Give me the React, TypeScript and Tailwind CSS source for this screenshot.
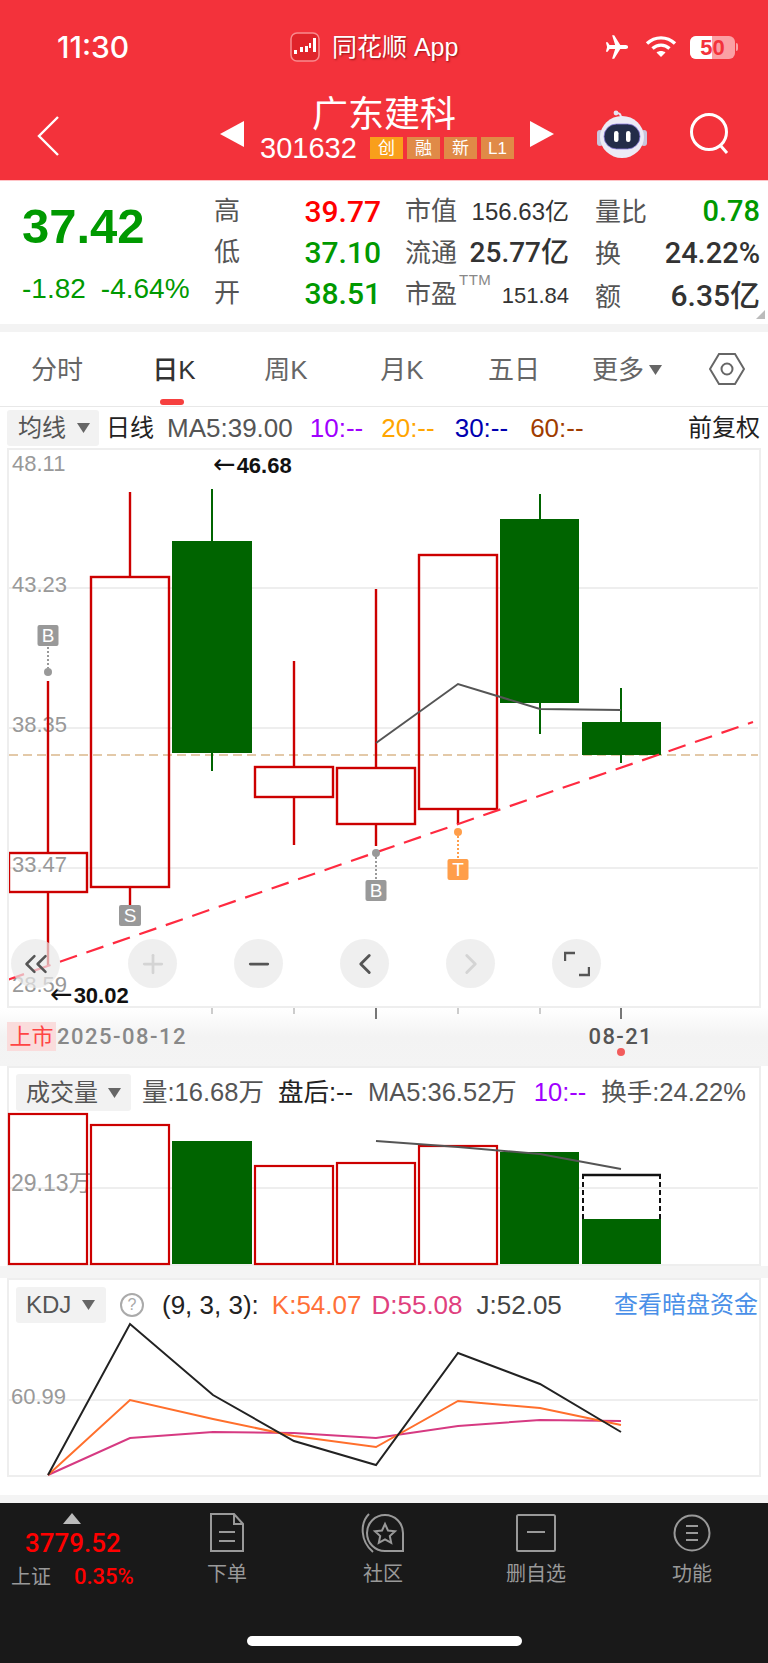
import { ChevronLeft, ChevronRight, ChevronsLeft, Minus, Plus } from 'lucide-react';

const RED = '#cc0000';
const GREEN = '#006400';

// x1-x2 corpo, y1-y2 corpo, wick top / bottom, coordenadas de pantalla
const candles = [
  { x1: 9, x2: 87, y1: 853, y2: 892, wx: 48, top: 681, bottom: 965, up: true },
  { x1: 91, x2: 169, y1: 577, y2: 887, wx: 130, top: 492, bottom: 910, up: true },
  { x1: 172, x2: 252, y1: 541, y2: 753, wx: 212, top: 489, bottom: 771, up: false },
  { x1: 255, x2: 333, y1: 767, y2: 797, wx: 294, top: 661, bottom: 845, up: true },
  { x1: 337, x2: 415, y1: 768, y2: 824, wx: 376, top: 589, bottom: 846, up: true },
  { x1: 419, x2: 497, y1: 555, y2: 809, wx: 458, top: 555, bottom: 824, up: true },
  { x1: 500, x2: 579, y1: 519, y2: 703, wx: 540, top: 494, bottom: 734, up: false },
  { x1: 582, x2: 661, y1: 722, y2: 755, wx: 621, top: 688, bottom: 763, up: false },
];

const volumes = [
  { x1: 9, x2: 87, top: 1113, up: true },
  { x1: 91, x2: 169, top: 1124, up: true },
  { x1: 172, x2: 252, top: 1141, up: false },
  { x1: 255, x2: 333, top: 1165, up: true },
  { x1: 337, x2: 415, top: 1162, up: true },
  { x1: 419, x2: 497, top: 1145, up: true },
  { x1: 500, x2: 579, top: 1152, up: false },
];

const kdjX = [48, 130, 213, 294, 376, 458, 540, 621];
const kdjJ = [1475, 1324, 1395, 1441, 1465, 1353, 1384, 1432];
const kdjK = [1475, 1400, 1419, 1436, 1447, 1401, 1408, 1425];
const kdjD = [1475, 1438, 1432, 1433, 1438, 1426, 1420, 1421];

const points = (ys: number[]) => ys.map((y, i) => `${kdjX[i]},${y}`).join(' ');

const Caret = ({ className = '' }: { className?: string }) => (
  <svg width="13" height="10" viewBox="0 0 13 10" className={className}>
    <path d="M0 0h13L6.5 10z" fill="#666" />
  </svg>
);

const Marker = ({ x, y, label, color, dotY, from, to }: { x: number; y: number; label: string; color: string; dotY: number; from: number; to: number }) => (
  <g>
    <line x1={x} x2={x} y1={from} y2={to} stroke={color} strokeWidth="2" strokeDasharray="2 2" />
    <circle cx={x} cy={dotY} r="4" fill={color} />
    <rect x={x - 10.5} y={y} width="21" height="21" rx="2" fill={color} />
    <text x={x} y={y + 17} textAnchor="middle" fontSize="19" fill="#fff">{label}</text>
  </g>
);

const StatusBar = () => (
  <div className="flex h-[94px] items-center">
    <span className="ml-[57px] w-[233px] font-['Inter'] text-[30px] font-medium leading-none text-white">11:30</span>
    <svg width="30" height="30" viewBox="0 0 30 30">
      <rect x="1" y="1" width="28" height="28" rx="6" fill="#e0242b" stroke="#f98a8e" strokeWidth="1.5" />
      <g fill="#fff">
        <rect x="4" y="18" width="3" height="4" />
        <rect x="10" y="15" width="3" height="5" />
        <rect x="15" y="14" width="3" height="6" />
        <rect x="19" y="11" width="2" height="5" />
        <rect x="23" y="6" width="3" height="14" />
      </g>
    </svg>
    <span className="ml-3 w-[146px] text-[25px] leading-none text-white [text-shadow:1px_1px_2px_rgba(90,0,0,0.6)]">同花顺 App</span>
    <svg width="30" height="28" viewBox="0 0 24 24" className="ml-[124px] mr-[13px]" fill="#fff">
      <path d="M21.5 12c0-1-.9-1.7-2-1.7h-4.7L9.6 2H7.8l2.6 8.3H5.6L4 8H2.5l1 4-1 4H4l1.6-2.3h4.8L7.8 22h1.8l5.2-8.3h4.7c1.1 0 2-.7 2-1.7z" />
    </svg>
    <svg width="32" height="24" viewBox="0 0 32 24" fill="none" stroke="#fff" strokeWidth="3.4">
      <path d="M2 8.5c8-7.5 20-7.5 28 0" />
      <path d="M7.5 13.5c5-4.5 12-4.5 17 0" />
      <path d="M16 22l-4.500-4.500c2.500-2 6.500-2 9 0z" fill="#fff" stroke="none" />
    </svg>
    <div className="relative ml-[13px] flex h-[23px] w-[45px] overflow-hidden rounded-[6px] bg-[#fba0a4]">
      <div className="h-full w-[22px] bg-white" />
      <span className="absolute inset-0 text-center text-[22px] font-bold leading-[23px] text-[#f3323b]">50</span>
    </div>
    <div className="ml-[1px] h-[8px] w-[2px] rounded-r bg-[#fba0a4]" />
  </div>
);

const NavBar = () => (
  <div className="flex h-[86px] items-start">
    <svg width="26" height="42" viewBox="0 0 26 42" fill="none" stroke="#fff" strokeWidth="2.4" className="ml-[36px] mt-[21px]">
      <path d="M22 2 3 21l19 19" />
    </svg>
    <svg width="24" height="26" viewBox="0 0 24 26" className="ml-[158px] mt-[27px]">
      <path d="M24 0v26L0 13z" fill="#fff" />
    </svg>
    <div className="ml-[15px] flex w-[271px] flex-col items-center">
      <span className="pr-[21px] pt-[1px] text-[36px] leading-[40px] text-white">广东建科</span>
      <div className="flex h-[26px] w-full items-center pl-[1px]">
        <span className="w-[110px] text-[29px] leading-none text-white">301632</span>
        <span className="flex h-[22px] w-[33px] items-center justify-center bg-[#f99f1b] text-[17px] leading-none text-white">创</span>
        <span className="ml-[4px] flex h-[22px] w-[33px] items-center justify-center bg-[#e08a47] text-[17px] leading-none text-white">融</span>
        <span className="ml-[4px] flex h-[22px] w-[33px] items-center justify-center bg-[#e08a47] text-[17px] leading-none text-white">新</span>
        <span className="ml-[4px] flex h-[22px] w-[33px] items-center justify-center bg-[#e08a47] text-[17px] leading-none text-white">L1</span>
      </div>
    </div>
    <svg width="24" height="26" viewBox="0 0 24 26" className="mt-[27px]">
      <path d="M0 0v26l24-13z" fill="#fff" />
    </svg>
    <svg width="52" height="50" viewBox="0 0 52 50" className="ml-[42px] mt-[16px]">
      <path d="M25 8c0-3-1-5-4-5" fill="none" stroke="#e6e3f2" strokeWidth="2" />
      <circle cx="20" cy="3" r="2.4" fill="#e6e3f2" />
      <rect x="1" y="20" width="6" height="16" rx="3" fill="#c8c6dc" />
      <rect x="45" y="20" width="6" height="16" rx="3" fill="#c8c6dc" />
      <ellipse cx="26" cy="27" rx="22" ry="21" fill="#ecebf5" />
      <rect x="8" y="14" width="36" height="25" rx="12.5" fill="#232c49" stroke="#8f7fe0" strokeWidth="0.8" />
      <rect x="18" y="21" width="4.5" height="11" rx="2.2" fill="#fff" />
      <rect x="30" y="21" width="4.5" height="11" rx="2.2" fill="#fff" />
    </svg>
    <svg width="44" height="44" viewBox="0 0 44 44" fill="none" stroke="#fff" strokeWidth="3" className="ml-[41px] mt-[19px]">
      <circle cx="20" cy="19" r="17.5" />
      <path d="m31 32 7 8" />
    </svg>
  </div>
);

const Quote = () => (
  <div className="flex h-[144px] border-t border-[#ffc4c7] bg-white pt-[10px]">
    <div className="w-[214px] shrink-0 pl-[22px]">
      <div className="h-[66px] pt-[8px] text-[49px] font-bold leading-[54px] text-[#009900]">37.42</div>
      <div className="flex h-[51px] items-end text-[28px] leading-[38px] text-[#009900]">
        <span>-1.82</span>
        <span className="ml-[15px]">-4.64%</span>
      </div>
    </div>
    <div className="w-[167px] shrink-0 text-[26px] leading-[41px]">
      <div className="flex justify-between text-[#555]"><span>高</span><span className="font-['Roboto'] text-[30px] font-medium text-[#ff0000]">39.77</span></div>
      <div className="flex justify-between text-[#555]"><span>低</span><span className="font-['Roboto'] text-[30px] font-medium text-[#009900]">37.10</span></div>
      <div className="flex justify-between text-[#555]"><span>开</span><span className="font-['Roboto'] text-[30px] font-medium text-[#009900]">38.51</span></div>
    </div>
    <div className="ml-[24px] w-[164px] shrink-0 text-[26px] leading-[41px] text-[#555]">
      <div className="flex items-baseline justify-between"><span>市值</span><span className="text-[24px] text-[#333]">156.63亿</span></div>
      <div className="flex items-baseline justify-between"><span>流通</span><span className="font-['Roboto','Noto_Sans_CJK_SC'] text-[28px] font-medium text-[#333]">25.77亿</span></div>
      <div className="flex items-baseline">
        <span>市盈</span>
        <span className="relative top-[-18px] ml-[2px] text-[15px] leading-none tracking-[0.5px] text-[#888]">TTM</span>
        <span className="ml-auto text-[22px] text-[#333]">151.84</span>
      </div>
    </div>
    <div className="relative ml-[26px] w-[165px] shrink-0 text-[26px] leading-[41px] text-[#555]">
      <div className="flex items-baseline justify-between"><span>量比</span><span className="font-['Roboto'] text-[29px] font-medium text-[#009900]">0.78</span></div>
      <div className="flex items-baseline justify-between"><span>换</span><span className="font-['Roboto'] text-[29px] font-medium text-[#333]">24.22%</span></div>
      <div className="flex items-baseline justify-between"><span>额</span><span className="font-['Roboto','Noto_Sans_CJK_SC'] text-[30px] font-medium text-[#333]">6.35亿</span></div>
    </div>
    <svg width="9" height="9" viewBox="0 0 9 9" className="ml-[-4px] mt-[119px]">
      <path d="M9 0v9H0z" fill="#bbb" />
    </svg>
  </div>
);

const Tabs = () => (
  <div className="flex h-[75px] border-b border-[#e8e8e8] text-[26px] leading-none text-[#666]">
    <div className="flex w-[114px] items-center justify-center pt-[2px]">分时</div>
    <div className="relative flex w-[120px] items-center justify-center pt-[2px] font-medium text-[#333]">
      日K
      <div className="absolute bottom-[1px] left-[46px] h-[6px] w-[24px] rounded-[3px] bg-[#f6403f]" />
    </div>
    <div className="flex w-[104px] items-center justify-center pt-[2px]">周K</div>
    <div className="flex w-[128px] items-center justify-center pt-[2px]">月K</div>
    <div className="flex w-[96px] items-center justify-center pt-[2px]">五日</div>
    <div className="ml-[30px] flex items-center pt-[2px]">更多<Caret className="ml-[5px]" /></div>
    <div className="ml-[47px] flex items-center">
      <svg width="36" height="34" viewBox="0 0 36 34" fill="none" stroke="#666" strokeWidth="2">
        <path d="M10 2h16l9 15-9 15H10L1 17z" />
        <circle cx="18" cy="17" r="5.5" />
      </svg>
    </div>
  </div>
);

const MaRow = () => (
  <div className="flex h-[41px] items-center pl-[7px] text-[26px] leading-none">
    <div className="flex h-[36px] w-[92px] items-center rounded-[3px] bg-[#f2f2f2] pl-[11px] text-[24px] text-[#555]">
      均线<Caret className="ml-[11px]" />
    </div>
    <span className="ml-[7px] text-[24px] text-[#222]">日线</span>
    <span className="ml-[13px] text-[#555]">MA5:39.00</span>
    <span className="ml-[17px] text-[#a000ff]">10:--</span>
    <span className="ml-[18px] text-[#ffa500]">20:--</span>
    <span className="ml-[20px] text-[#0000b0]">30:--</span>
    <span className="ml-[22px] text-[#a03c00]">60:--</span>
    <span className="ml-auto pr-[8px] text-[24px] text-[#222]">前复权</span>
  </div>
);

const KChart = () => (
  <div className="relative mx-[7px] h-[560px] border-2 border-[#eeeeee] bg-white">
    <svg width="749" height="556" viewBox="9 450 749 556" className="block">
      {[588, 728, 868].map(y => <line key={y} x1="9" x2="758" y1={y} y2={y} stroke="#eeeeee" strokeWidth="2" />)}
      {[['48.11', 471], ['43.23', 592], ['38.35', 732], ['33.47', 872], ['28.59', 992]].map(([t, y]) => (
        <text key={t} x="12" y={y} fontSize="22" fill="#999">{t}</text>
      ))}
      <line x1="9" x2="758" y1="755" y2="755" stroke="#e3c9a8" strokeWidth="2" strokeDasharray="9 5" />
      {candles.map(c => c.up ? (
        <g key={c.x1} stroke={RED} strokeWidth="2.4" fill="none">
          <line x1={c.wx} x2={c.wx} y1={c.top} y2={c.y1} />
          <line x1={c.wx} x2={c.wx} y1={c.y2} y2={c.bottom} />
          <rect x={c.x1} y={c.y1} width={c.x2 - c.x1} height={c.y2 - c.y1} />
        </g>
      ) : (
        <g key={c.x1}>
          <line x1={c.wx} x2={c.wx} y1={c.top} y2={c.bottom} stroke={GREEN} strokeWidth="2" />
          <rect x={c.x1} y={c.y1} width={c.x2 - c.x1} height={c.y2 - c.y1} fill={GREEN} />
        </g>
      ))}
      <polyline points="376,743 458,684 540,709 621,710" fill="none" stroke="#555" strokeWidth="2" />
      <line x1="7" x2="753" y1="980" y2="722" stroke="#ff2a40" strokeWidth="2.2" strokeDasharray="18 10" />
      <Marker x={48} y={625} label="B" color="#999" dotY={672} from={647} to={668} />
      <Marker x={376} y={880} label="B" color="#999" dotY={853} from={857} to={880} />
      <Marker x={458} y={859} label="T" color="#ff9e4a" dotY={832} from={836} to={859} />
      <g>
        <rect x="119" y="905" width="22" height="21" rx="2" fill="#999" />
        <text x="130" y="922" textAnchor="middle" fontSize="19" fill="#fff">S</text>
      </g>
      <g fontSize="22" fontWeight="700" fill="#111">
        <text x="213" y="473"><tspan fontFamily="DejaVu Sans" fontSize="27" fontWeight="400">←</tspan><tspan dx="1">46.68</tspan></text>
        <text x="50" y="1003"><tspan fontFamily="DejaVu Sans" fontSize="27" fontWeight="400">←</tspan><tspan dx="1">30.02</tspan></text>
      </g>
    </svg>
    <div className="absolute left-[2px] top-[489px] flex">
      <div className="flex h-[49px] w-[49px] items-center justify-center rounded-full bg-[#e8e8e8]/70 text-[#555]"><ChevronsLeft size={38} strokeWidth={1.6} /></div>
      <div className="ml-[68px] flex h-[49px] w-[49px] items-center justify-center rounded-full bg-[#e8e8e8]/70 text-[#d4d4d4]"><Plus size={30} strokeWidth={2.2} /></div>
      <div className="ml-[57px] flex h-[49px] w-[49px] items-center justify-center rounded-full bg-[#e8e8e8]/70 text-[#555]"><Minus size={30} strokeWidth={2.2} /></div>
      <div className="ml-[57px] flex h-[49px] w-[49px] items-center justify-center rounded-full bg-[#e8e8e8]/70 text-[#555]"><ChevronLeft size={34} strokeWidth={2} /></div>
      <div className="ml-[57px] flex h-[49px] w-[49px] items-center justify-center rounded-full bg-[#e8e8e8]/70 text-[#d4d4d4]"><ChevronRight size={34} strokeWidth={2} /></div>
      <div className="ml-[57px] flex h-[49px] w-[49px] items-center justify-center rounded-full bg-[#e8e8e8]/70">
        <svg width="26" height="26" viewBox="0 0 26 26" fill="none" stroke="#555" strokeWidth="2.4">
          <path d="M1 10V2h10M25 16v8H15" />
        </svg>
      </div>
    </div>
  </div>
);

const DateRow = () => (
  <div className="h-[58px] bg-gradient-to-b from-white via-[#f3f3f3] to-[#f4f4f4]">
    <svg width="768" height="14" viewBox="0 0 768 14" className="block">
      {[212, 294, 458, 540].map(x => <line key={x} x1={x} x2={x} y1="0" y2="6" stroke="#bbb" strokeWidth="1.5" />)}
      {[376, 621].map(x => <line key={x} x1={x} x2={x} y1="0" y2="11" stroke="#777" strokeWidth="2" />)}
    </svg>
    <div className="flex h-[29px] items-center pl-[7px] text-[22px] leading-none">
      <span className="flex h-[29px] w-[49px] items-center justify-center bg-[#fadcdc] text-[#f44]">上市</span>
      <span className="ml-[1px] font-['Roboto'] font-medium tracking-[1.5px] text-[#888]">2025-08-12</span>
      <span className="relative ml-auto mr-[115px] font-['Roboto'] font-medium tracking-[1.4px] text-[#555]">
        08-21
        <span className="absolute bottom-[-8px] left-[28px] h-[8px] w-[8px] rounded-full bg-[#f25c5c]" />
      </span>
    </div>
  </div>
);

const VolumePanel = () => (
  <div className="mx-[7px] h-[200px] border-2 border-[#eeeeee] bg-white">
    <div className="flex h-[45px] items-start pl-[7px] pt-[6px] text-[25.5px] leading-none">
      <div className="flex h-[37px] w-[115px] items-center rounded-[3px] bg-[#f2f2f2] pl-[10px] text-[24px] text-[#555]">
        成交量<Caret className="ml-[10px]" />
      </div>
      <div className="ml-[11px] flex h-[37px] items-center text-[#555]">
        <span>量:16.68万</span>
        <span className="ml-[14px] text-[#222]">盘后:--</span>
        <span className="ml-[15px]">MA5:36.52万</span>
        <span className="ml-[17px] text-[#a000ff]">10:--</span>
        <span className="ml-[15px]">换手:24.22%</span>
      </div>
    </div>
    <svg width="749" height="151" viewBox="9 1113 749 151" className="block overflow-visible">
      <line x1="9" x2="758" y1="1188" y2="1188" stroke="#eeeeee" strokeWidth="2" />
      <text x="11" y="1191" fontSize="23" fill="#999">29.13万</text>
      {volumes.map(v => v.up ? (
        <rect key={v.x1} x={v.x1} y={v.top + 1} width={v.x2 - v.x1} height={1263 - v.top} fill="none" stroke={RED} strokeWidth="2.2" />
      ) : (
        <rect key={v.x1} x={v.x1} y={v.top} width={v.x2 - v.x1} height={1264 - v.top} fill={GREEN} />
      ))}
      <rect x="582" y="1219" width="79" height="45" fill={GREEN} />
      <path d="M583 1219v-44M660 1219v-44" stroke="#111" strokeWidth="2" strokeDasharray="5 3" fill="none" />
      <line x1="582" x2="661" y1="1175" y2="1175" stroke="#111" strokeWidth="2.4" />
      <polyline points="376,1141 458,1147 540,1154 621,1169" fill="none" stroke="#555" strokeWidth="2" />
    </svg>
  </div>
);

const KdjPanel = () => (
  <div className="mx-[7px] h-[199px] border-2 border-[#eeeeee] bg-white">
    <div className="flex h-[43px] items-start pl-[7px] pt-[7px] text-[26px] leading-none">
      <div className="flex h-[36px] w-[90px] items-center rounded-[3px] bg-[#f2f2f2] pl-[10px] text-[24px] text-[#555]">
        KDJ<Caret className="ml-[11px]" />
      </div>
      <div className="ml-[14px] flex h-[36px] flex-1 items-center text-[#222]">
        <span className="flex h-[24px] w-[24px] items-center justify-center rounded-full border-2 border-[#aaa] text-[16px] text-[#aaa]">?</span>
        <span className="ml-[18px]">(9, 3, 3):</span>
        <span className="ml-[13px] text-[#ff7038]">K:54.07</span>
        <span className="ml-[10px] text-[#e0407e]">D:55.08</span>
        <span className="ml-[14px] text-[#444]">J:52.05</span>
        <span className="ml-auto pr-[1px] text-[24px] text-[#4a90e8]">查看暗盘资金</span>
      </div>
    </div>
    <svg width="749" height="152" viewBox="9 1323 749 152" className="block overflow-visible">
      <line x1="9" x2="758" y1="1400" y2="1400" stroke="#eeeeee" strokeWidth="2" />
      <text x="11" y="1404" fontSize="22" fill="#999">60.99</text>
      <polyline points={points(kdjD)} fill="none" stroke="#d63a82" strokeWidth="2" />
      <polyline points={points(kdjK)} fill="none" stroke="#ff6f2c" strokeWidth="2" />
      <polyline points={points(kdjJ)} fill="none" stroke="#222" strokeWidth="2" />
    </svg>
  </div>
);

const BottomBar = () => (
  <div className="h-[160px] bg-[#191919] text-[#999]">
    <div className="flex h-[124px] items-start">
      <div className="w-[150px] shrink-0">
        <svg width="18" height="11" viewBox="0 0 18 11" className="ml-[63px] mt-[10px] block">
          <path d="M9 0l9 11H0z" fill="#bbb" />
        </svg>
        <div className="ml-[25px] mt-[2px] font-['Roboto'] text-[26px] font-medium leading-[34px] text-[#ff0000]">3779.52</div>
        <div className="mt-[2px] flex items-center pl-[11px] text-[20px] leading-[30px]">
          <span>上证</span>
          <span className="ml-[23px] font-['Roboto'] text-[22px] font-medium text-[#ff0000]">0.35%</span>
        </div>
      </div>
      <div className="flex w-[154px] flex-col items-center pt-[10px]">
        <svg width="38" height="40" viewBox="0 0 38 40" fill="none" stroke="#999" strokeWidth="2">
          <path d="M3 1h23l9 10v27H3zM26 1v10h9M11 19h16M11 28h16" />
        </svg>
        <span className="mt-[8px] text-[20px] leading-[26px]">下单</span>
      </div>
      <div className="flex w-[158px] flex-col items-center pt-[10px]">
        <svg width="44" height="40" viewBox="0 0 44 40" fill="none" stroke="#999" strokeWidth="2">
          <path d="M8 1C-1 10-1 28 12 39" />
          <path d="M24 2c10 0 18 8 18 18v18H24C14 38 6 30 6 20S14 2 24 2z" />
          <path d="m24 11 3 6.5 7 .8-5.200 4.700 1.400 6.900-6.200-3.500-6.200 3.500 1.400-6.900-5.200-4.700 7-.8z" />
        </svg>
        <span className="mt-[8px] text-[20px] leading-[26px]">社区</span>
      </div>
      <div className="flex w-[148px] flex-col items-center pt-[10px]">
        <svg width="40" height="40" viewBox="0 0 40 40" fill="none" stroke="#999" strokeWidth="2">
          <rect x="1" y="2" width="38" height="36" rx="1.500" />
          <path d="M11 19h18" />
        </svg>
        <span className="mt-[8px] text-[20px] leading-[26px]">删自选</span>
      </div>
      <div className="flex w-[158px] flex-col items-center pl-[6px] pt-[10px]">
        <svg width="38" height="40" viewBox="0 0 38 40" fill="none" stroke="#999" strokeWidth="2">
          <circle cx="19" cy="20" r="17.500" />
          <path d="M13 13h12M13 20h12M13 27h12" />
        </svg>
        <span className="mt-[8px] text-[20px] leading-[26px]">功能</span>
      </div>
    </div>
    <div className="ml-[247px] mt-[9px] h-[10px] w-[275px] rounded-full bg-white" />
  </div>
);

const App = () => {
  return (
    <main className="h-[1663px] w-[768px] overflow-hidden bg-white font-['Liberation_Sans','Noto_Sans_CJK_SC',sans-serif]">
      <div className="h-[180px] bg-[#f3323b]">
        <StatusBar />
        <NavBar />
      </div>
      <Quote />
      <div className="h-[8px] bg-[#f3f3f3]" />
      <Tabs />
      <MaRow />
      <KChart />
      <DateRow />
      <VolumePanel />
      <div className="h-[12px] bg-[#f4f4f4]" />
      <KdjPanel />
      <div className="h-[18px] bg-white" />
      <div className="h-[8px] bg-[#f4f4f4]" />
      <BottomBar />
    </main>
  );
};

export default App;
